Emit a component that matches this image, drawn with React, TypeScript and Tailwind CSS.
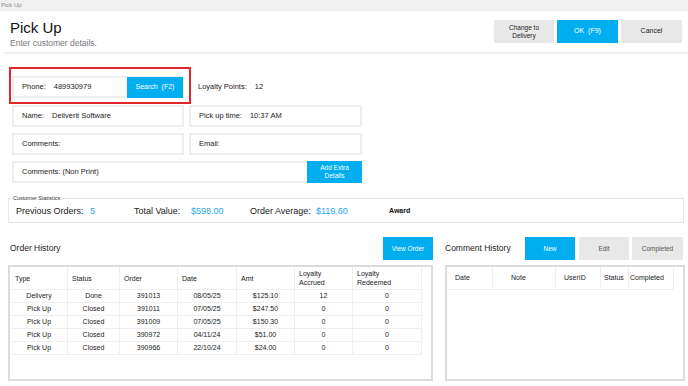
import React from "react";

const orders = [
  ["Delivery", "Done", "391013", "08/05/25", "$125.10", "12", "0"],
  ["Pick Up", "Closed", "391011", "07/05/25", "$247.50", "0", "0"],
  ["Pick Up", "Closed", "391009", "07/05/25", "$150.30", "0", "0"],
  ["Pick Up", "Closed", "390972", "04/11/24", "$51.00", "0", "0"],
  ["Pick Up", "Closed", "390966", "22/10/24", "$24.00", "0", "0"],
];

function Field({ label, value, w }: { label: string; value?: string; w: string }) {
  return (
    <div className={`${w} h-[22px] border-2 border-[#eeeeee] flex items-center pl-[8px] text-[7.5px] text-[#222]`}>
      <span>{label}</span>
      {value && <span className="ml-[8px]">{value}</span>}
    </div>
  );
}

export default function App() {
  return (
    <div className="w-[688px] h-[386px] bg-white overflow-hidden font-['Liberation_Sans',Arial,sans-serif] text-[#222]">
      {/* window title bar */}
      <div className="h-[11px] bg-[#f0f0f0] text-[6px] leading-[11px] pl-[1px] text-[#8a8a8a]">Pick Up</div>

      {/* header */}
      <div className="h-[41px] flex justify-between pl-[10px] pr-[6px] pt-[9px]">
        <div>
          <div className="text-[15px] leading-[16px] text-[#111]">Pick Up</div>
          <div className="text-[8.5px] leading-[10px] mt-[2px] text-[#777]">Enter customer details.</div>
        </div>
        <div className="flex gap-[3px] h-[23px]">
          <button className="w-[60px] h-full bg-[#e8e8e8] text-[6.5px] leading-[8px] text-[#222]">
            Change to<br />Delivery
          </button>
          <button className="w-[61px] h-full bg-[#00aeef] text-[7px] text-white">OK&nbsp;&nbsp;(F9)</button>
          <button className="w-[61px] h-full bg-[#e8e8e8] text-[7px] text-[#222]">Cancel</button>
        </div>
      </div>
      <div className="h-[2px] bg-[#f0f0f0] ml-[4px]" />

      {/* form */}
      <div className="relative pl-[12px] pt-[22px]">
        <div className="absolute left-[9px] top-[13px] w-[182px] h-[37px] border-2 border-[#e0262b] pointer-events-none" />
        <div className="flex items-center h-[22px]">
          <div className="w-[172px] h-[22px] border-2 border-[#eeeeee] flex items-center text-[7.5px]">
            <span className="pl-[8px]">Phone:</span>
            <span className="ml-[8px] flex-1">489930979</span>
            <button className="w-[56px] h-[21px] bg-[#00aeef] text-white text-[7px] mr-[-1px]">Search&nbsp;&nbsp;(F2)</button>
          </div>
          <div className="ml-[14px] text-[7.5px]">
            <span>Loyalty Points:</span>
            <span className="ml-[8px]">12</span>
          </div>
        </div>
        <div className="flex gap-[5px] mt-[7px]">
          <Field w="w-[172px]" label="Name:" value="Deliverit Software" />
          <Field w="w-[173px]" label="Pick up time:" value="10:37 AM" />
        </div>
        <div className="flex gap-[5px] mt-[6px]">
          <Field w="w-[172px]" label="Comments:" />
          <Field w="w-[173px]" label="Email:" />
        </div>
        <div className="mt-[6px] w-[350px] h-[22px] border-2 border-[#eeeeee] border-r-0 flex items-center text-[7.5px]">
          <span className="pl-[8px] flex-1">Comments: (Non Print)</span>
          <button className="w-[55px] h-[22px] bg-[#00aeef] text-white text-[6.5px] leading-[8px]">
            Add Extra<br />Details
          </button>
        </div>
      </div>

      {/* customer statistics */}
      <fieldset className="ml-[8px] mt-[12px] w-[676px] border border-[#e6e6e6]">
        <legend className="text-[5.5px] leading-[6px] ml-[4px] text-[#333]">Customer Statistics:</legend>
        <div className="h-[21px] flex items-center pl-[7px] text-[9px]">
          <span className="w-[74px]">Previous Orders:</span>
          <span className="w-[44px] text-[#22aaee]">5</span>
          <span className="w-[57px]">Total Value:</span>
          <span className="w-[59px] text-[#22aaee]">$598.00</span>
          <span className="w-[66px]">Order Average:</span>
          <span className="w-[73px] text-[#22aaee]">$119.60</span>
          <span className="font-bold text-[7px] text-[#111]">Award</span>
        </div>
      </fieldset>

      {/* history */}
      <div className="flex mt-[14px] pl-[8px] gap-[12px]">
        <div className="w-[425px]">
          <div className="h-[23px] flex items-center justify-between">
            <span className="pl-[2px] text-[8.5px] text-[#222]">Order History</span>
            <button className="w-[50px] h-[23px] bg-[#00aeef] text-white text-[6.5px]">View Order</button>
          </div>
          <div className="mt-[5px] h-[116px] border-2 border-[#dcdcdc] pl-[1px]">
            <div className="grid grid-cols-[57px_52px_58px_59px_58px_58px_69px] w-[411px] text-[7px] text-[#222]">
              {["Type", "Status", "Order", "Date", "Amt", "Loyalty\nAccrued", "Loyalty\nRedeemed"].map((h, i) => (
                <div
                  key={i}
                  className="h-[23px] flex items-center pl-[4px] leading-[9px] whitespace-pre-line border-r border-b border-[#efefef]"
                >
                  {h}
                </div>
              ))}
              {orders.map((r, ri) =>
                r.map((c, ci) => (
                  <div
                    key={`${ri}-${ci}`}
                    className="h-[13px] flex items-center justify-center border-r border-b border-[#efefef]"
                  >
                    {c}
                  </div>
                ))
              )}
            </div>
          </div>
        </div>

        <div className="w-[240px]">
          <div className="h-[23px] flex items-center">
            <span className="w-[80px] text-[8.5px] text-[#222]">Comment History</span>
            <button className="w-[50px] h-[23px] bg-[#00aeef] text-white text-[6.5px]">New</button>
            <button className="ml-[4px] w-[50px] h-[23px] bg-[#e8e8e8] text-[#555] text-[6.5px]">Edit</button>
            <button className="ml-[3px] w-[51px] h-[23px] bg-[#e8e8e8] text-[#555] text-[6.5px]">Completed</button>
          </div>
          <div className="mt-[5px] h-[116px] border-2 border-[#dcdcdc]">
            <div className="grid grid-cols-[46px_63px_45px_28px_45px] w-[227px] text-[7px] text-[#222]">
              {[
                ["Date", "pl-[8px]"],
                ["Note", "pl-[18px]"],
                ["UserID", "pl-[8px]"],
                ["Status", "pl-[3px]"],
                ["Completed", "pl-[1px]"],
              ].map(([h, p]) => (
                <div key={h} className={`h-[23px] flex items-center ${p} border-r border-b border-[#efefef]`}>
                  {h}
                </div>
              ))}
            </div>
          </div>
        </div>
      </div>
    </div>
  );
}
